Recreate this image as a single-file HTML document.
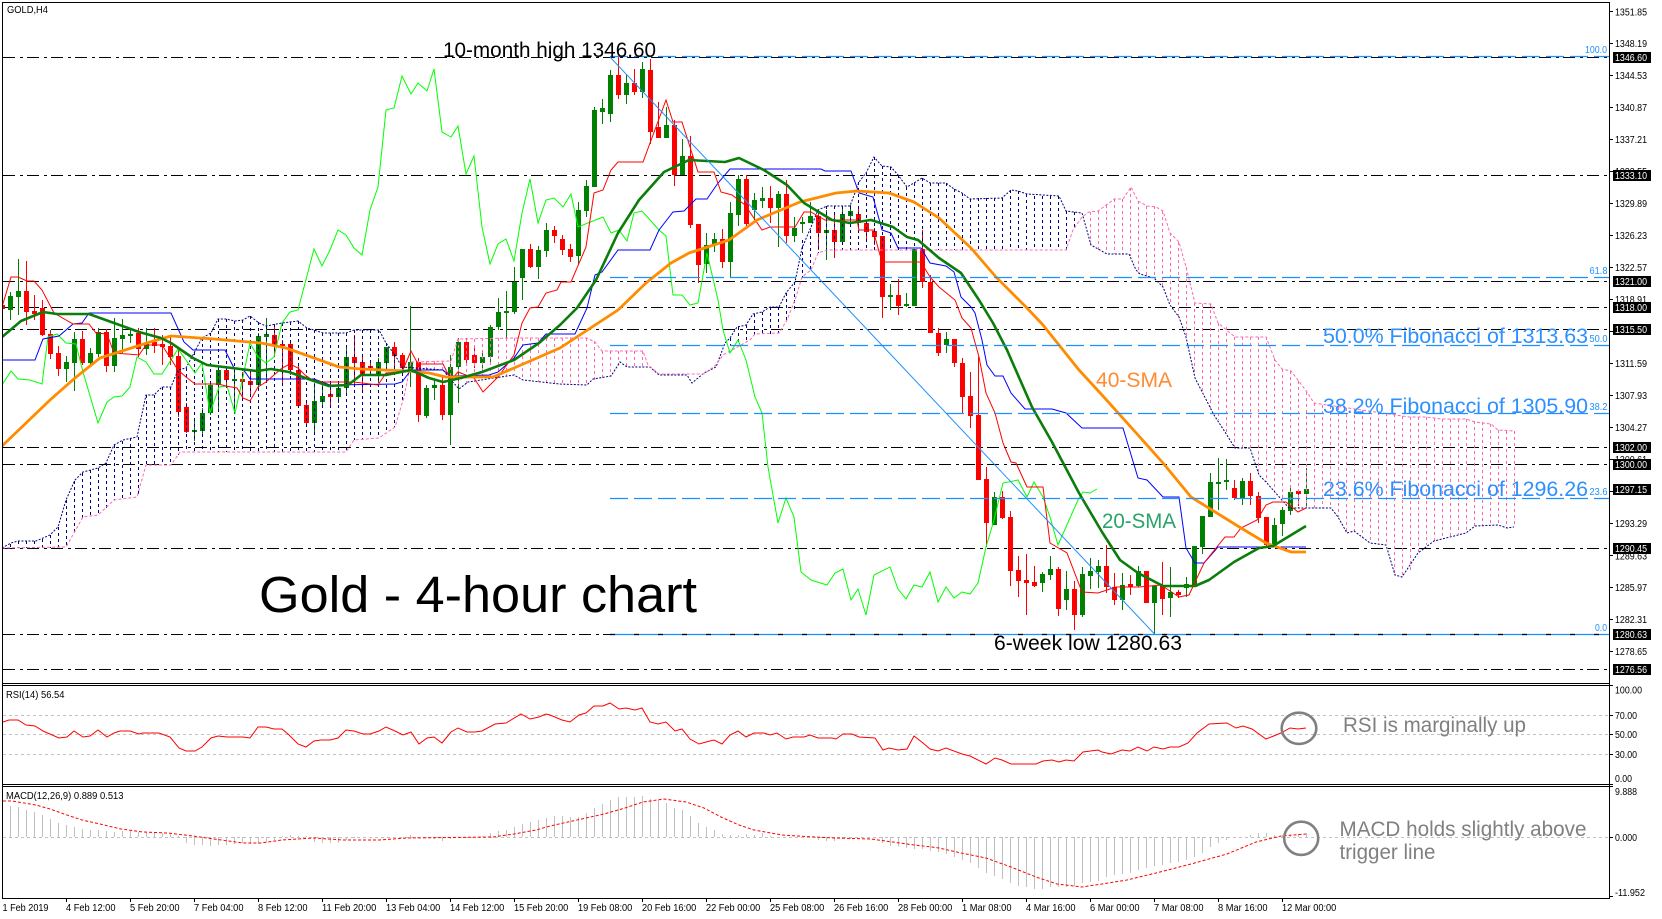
<!DOCTYPE html>
<html><head><meta charset="utf-8"><title>Gold - 4-hour chart</title>
<style>
html,body{margin:0;padding:0;background:#fff;width:1662px;height:919px;overflow:hidden}
svg{position:absolute;left:0;top:0;display:block}
text{font-family:"Liberation Sans",sans-serif;fill:#000}
.a{font-size:10px}
.b{font-size:10px;fill:#fff}
.f{font-size:10px;fill:#1e90ff}
.big{font-size:21px}
.fib{font-size:21px;fill:#2e90ff}
.g{font-size:21px;fill:#808080}
</style></head><body>
<svg width="1662" height="919" viewBox="0 0 1662 919" xmlns="http://www.w3.org/2000/svg">
<rect width="1662" height="919" fill="#fff"/>
<defs><clipPath id="m"><rect x="3" y="3" width="1606" height="680"/></clipPath></defs>

<!-- horizontal dash-dot levels -->
<g stroke="#000" stroke-width="1" stroke-dasharray="12 5 3 4" fill="none">
<path d="M3 57.5H1609M3 175.5H1609M3 281.5H1609M3 307.5H1609M3 329.5H1609M3 447.5H1609M3 464.5H1609M3 548.5H1609M3 634.5H1609M3 669.5H1609"/>
</g>

<g clip-path="url(#m)">
<!-- candles -->
<g transform="translate(.5 0)" fill="none">
<path stroke="#008000" stroke-width="1" d="M10 292V320M18 259V315M66 356V382M74 332V391M90 348V366M98 328V357M114 318V372M122 319V353M130 328V343M146 328V355M194 418V441M202 408V437M210 383V415M218 367V412M234 370V413M258 333V388M266 318V383M314 383V432M322 385V407M338 382V403M346 345V393M378 358V383M386 347V367M410 306V387M426 385V418M434 380V400M450 355V445M458 338V403M482 350V370M490 325V363M498 298V330M506 291V340M514 267V314M522 249V300M538 246V279M546 223V257M578 202V265M586 180V217M594 107V187M602 99V124M610 70V122M626 75V104M642 62V98M666 107V138M682 139V175M706 233V273M714 233V252M730 202V277M738 175V226M754 193V223M762 187V208M778 191V247M794 217V242M802 217V233M810 202V223M826 210V260M842 207V242M850 205V223M890 284V310M906 293V307M914 249V306M946 332V353M994 492V525M1042 572V592M1050 556V580M1066 571V610M1082 567V617M1090 558V589M1098 560V588M1122 573V610M1138 566V587M1154 586V634M1170 567V617M1186 577V597M1194 546V587M1202 516V554M1210 473V517M1218 458V510M1226 459V490M1242 478V505M1274 518V545M1282 507V536M1290 488V515M1306 468V506"/>
<path stroke="#008000" stroke-width="5" d="M10 296V310M18 291V297M66 362V369M74 339V363M90 353V363M98 332V354M114 338V366M122 335V339M130 334V336M146 344V349M194 430V432M202 413V431M210 385V413M218 370V385M234 379V381M258 336V385M266 334V337M314 401V423M322 396V402M338 388V397M346 357V388M378 362V375M386 347V363M410 362V370M426 388V416M434 385V388M450 367V415M458 342V367M482 357V363M490 327V357M498 312V327M506 311V313M514 282V312M522 249V278M538 250V267M546 230V251M578 210V256M586 186V211M594 110V187M602 108V112M610 75V114M626 83V95M642 69V92M666 125V138M682 156V175M706 245V264M714 239V245M730 213V262M738 179V215M754 200V210M762 198V201M778 194V208M794 228V236M802 222V224M810 216V223M826 230V233M842 214V242M850 211V216M890 295V297M906 304V306M914 249V306M946 339V345M994 497V525M1042 574V583M1050 569V575M1066 589V600M1082 574V615M1090 571V576M1098 566V572M1122 585V600M1138 571V586M1154 586V603M1170 592V598M1186 584V588M1194 546V587M1202 516V547M1210 482V517M1218 482V484M1226 480V482M1242 481V498M1274 525V545M1282 510V524M1290 492V511M1306 489V494"/>
<path stroke="#f00" stroke-width="1" d="M2 300V312M26 261V325M34 295V320M42 300V336M50 330V359M58 346V376M82 331V365M106 329V372M138 328V357M154 328V353M162 335V365M170 335V365M178 350V417M186 403V433M226 367V385M242 372V400M250 370V395M274 327V355M282 340V383M290 342V375M298 365V407M306 400V424M330 383V408M354 335V385M362 355V393M370 362V372M394 342V368M402 353V375M418 358V422M442 377V420M466 338V363M474 347V368M530 244V268M554 226V243M562 235V255M570 244V262M618 57V99M634 69V95M650 59V144M658 102V138M674 120V186M690 136V228M698 224V283M722 229V268M746 175V229M770 186V223M786 180V243M818 213V250M834 213V258M858 207V229M866 220V242M874 228V245M882 236V318M898 279V315M922 230V288M930 275V333M938 328V356M954 339V367M962 358V413M970 372V428M978 357V480M986 467V547M1002 491V519M1010 511V586M1018 556V597M1026 554V615M1034 566V587M1058 567V616M1074 581V630M1106 545V593M1114 573V605M1130 575V595M1146 571V603M1162 562V615M1178 590V598M1234 480V500M1250 473V505M1258 492V523M1266 517V546M1298 491V506"/>
<path stroke="#f00" stroke-width="5" d="M2 305V309M26 291V312M34 311V314M42 308V335M50 334V354M58 353V369M82 339V363M106 332V366M138 333V349M154 342V346M162 344V347M170 346V357M178 356V412M186 407V432M226 370V380M242 379V382M250 381V385M274 335V345M282 344V346M290 344V370M298 370V406M306 405V423M330 394V397M354 357V363M362 362V375M370 366V368M394 347V356M402 355V368M418 362V415M442 385V415M466 342V360M474 355V363M530 249V267M554 230V236M562 239V250M570 249V257M618 75V95M634 83V92M650 70V132M658 127V138M674 125V175M690 156V225M698 224V265M722 239V262M746 179V224M770 198V208M786 194V236M818 216V233M834 230V242M858 214V223M866 223V232M874 231V237M882 236V297M898 295V306M922 249V282M930 282V333M938 333V353M954 339V363M962 363V397M970 396V416M978 415V480M986 479V523M1002 497V518M1010 517V571M1018 570V581M1026 580V583M1034 582V586M1058 569V609M1074 589V615M1106 566V587M1114 587V600M1130 584V587M1146 571V603M1162 586V599M1178 592V595M1234 488V498M1250 481V496M1258 496V518M1266 517V545M1298 491V494"/>
</g>

<!-- ichimoku hatch -->
<path fill="none" stroke="#000080" stroke-width="1" stroke-dasharray="3 3" d="M10.5 544V548M18.5 541V548M26.5 541V548M34.5 541V548M42.5 539V548M50.5 535V548M58.5 527V547M66.5 500V547M74.5 481V532M82.5 473V518M90.5 470V516M98.5 468V515M106.5 463V510M114.5 445V500M122.5 441V499M130.5 438V498M138.5 437V497M146.5 395V465M154.5 395V465M162.5 387V465M170.5 387V465M178.5 370V455M186.5 368V452M194.5 352V452M202.5 338V452M210.5 333V452M218.5 319V452M226.5 319V452M234.5 321V452M242.5 320V452M250.5 316V452M258.5 322V452M266.5 326V452M274.5 324V452M282.5 323V452M290.5 322V452M298.5 321V452M306.5 328V452M314.5 330V452M322.5 333V452M330.5 333V452M338.5 333V452M346.5 333V452M354.5 330V440M362.5 330V439M370.5 330V438M378.5 330V438M386.5 343V433M394.5 354V427M402.5 367V400M730.5 338V346M738.5 327V345M746.5 325V342M754.5 314V335M762.5 312V335M770.5 307V334M778.5 307V333M786.5 293V322M794.5 282V309M802.5 240V277M810.5 230V270M818.5 210V253M826.5 206V250M834.5 206V250M842.5 206V250M850.5 206V250M858.5 182V250M866.5 173V250M874.5 157V250M882.5 166V250M890.5 167V250M898.5 175V250M906.5 187V250M914.5 183V250M922.5 178V250M930.5 183V250M938.5 183V250M946.5 183V250M954.5 189V250M962.5 193V250M970.5 199V250M978.5 198V250M986.5 198V250M994.5 198V250M1002.5 198V250M1010.5 190V250M1018.5 191V250M1026.5 194V250M1034.5 196V250M1042.5 196V250M1050.5 196V250M1058.5 196V250M1066.5 211V250M1074.5 212V229"/>
<path fill="none" stroke="#ff69b4" stroke-width="1" stroke-dasharray="3 3" d="M410.5 362V370M418.5 361V370M426.5 361V370M434.5 361V370M442.5 361V370M450.5 361V380M458.5 339V386M466.5 339V384M474.5 339V382M482.5 338V380M490.5 338V378M498.5 338V377M506.5 338V376M514.5 338V375M522.5 338V380M530.5 338V381M538.5 338V382M546.5 338V383M554.5 338V384M562.5 338V385M570.5 338V385M578.5 338V385M586.5 338V385M594.5 341V380M602.5 351V378M610.5 351V376M618.5 351V365M626.5 351V367M634.5 351V367M642.5 351V367M1090.5 212V245M1098.5 211V250M1106.5 205V253M1114.5 199V254M1122.5 199V254M1130.5 188V256M1138.5 201V274M1146.5 206V276M1154.5 206V278M1162.5 211V287M1170.5 233V305M1178.5 242V317M1186.5 267V337M1194.5 303V375M1202.5 304V392M1210.5 304V408M1218.5 323V420M1226.5 327V433M1234.5 337V448M1242.5 337V448M1250.5 337V448M1258.5 337V474M1266.5 337V482M1274.5 358V492M1282.5 369V500M1290.5 371V508M1298.5 381V508M1306.5 392V508M1314.5 403V508M1322.5 405V508M1330.5 406V508M1338.5 407V517M1346.5 408V533M1354.5 409V531M1362.5 410V537M1370.5 411V543M1378.5 412V544M1386.5 413V545M1394.5 414V575M1402.5 416V577M1410.5 417V570M1418.5 417V553M1426.5 417V545M1434.5 418V541M1442.5 419V538M1450.5 419V536M1458.5 419V534M1466.5 419V533M1474.5 421V526M1482.5 422V525M1490.5 424V525M1498.5 430V525M1506.5 431V528M1514.5 431V527"/>

<!-- senkou A -->
<polyline fill="none" stroke="#000080" stroke-width="1" stroke-dasharray="2 1.5" points="2,548 11,543 18,541 36,541 50,535 58,527 66,500 75,480 83,472 98,468 106,463 114,445 123,440 137,437 146,395 154,395 162,387 171,387 178,370 186,368 202,338 211,333 218,319 226,319 235,321 243,320 250,316 259,323 266,326 282,323 298,321 307,328 314,330 323,333 346,333 354,330 379,330 386,343 395,355 402,367 443,370 451,380 459,389 468,382 514,375 523,380 560,384 587,385 593,379 611,376 620,362 627,367 650,367 659,375 687,375 692,383 704,373 716,367 725,343 730,338 737,327 746,325 753,314 762,312 770,307 779,307 786,293 795,282 802,248 811,227 818,210 827,206 850,206 859,182 866,173 874,157 882,166 891,167 898,175 907,187 914,183 922,178 930,183 939,183 946,183 954,189 962,193 970,199 1002,198 1011,190 1018,191 1027,194 1059,196 1066,211 1082,213 1091,245 1107,254 1129,254 1136,270 1140,274 1154,278 1163,287 1170,305 1179,317 1186,337 1195,378 1214,415 1225,432 1235,448 1250,448 1259,475 1266,482 1289,508 1331,508 1338,517 1347,533 1354,531 1370,543 1386,545 1395,575 1402,577 1418,553 1434,541 1466,533 1475,526 1498,525 1507,528 1514,527"/>
<!-- senkou B -->
<polyline fill="none" stroke="#ff69b4" stroke-width="1" stroke-dasharray="3 2" points="2,548 66,547 83,517 98,515 114,500 137,497 146,465 171,465 180,452 346,452 354,440 379,438 395,427 404,397 411,362 451,361 458,339 514,338 587,338 595,342 602,351 643,351 648,365 659,374 704,374 716,365 723,355 750,340 755,334 779,333 787,320 795,300 802,277 811,270 818,253 827,250 1066,250 1073,230 1082,217 1089,212 1098,211 1109,203 1114,199 1123,199 1131,187 1138,201 1147,206 1156,207 1163,211 1170,233 1179,242 1186,267 1195,303 1211,304 1218,323 1235,337 1266,337 1275,360 1282,369 1291,371 1307,392 1314,403 1409,417 1427,417 1441,419 1466,419 1475,422 1491,424 1498,430 1514,431"/>

<!-- chikou -->
<polyline fill="none" stroke="#00ff00" stroke-width="1" points="2,385 11,371 18,379 30,380 42,384 48,337 57,334 66,343 76,344 83,372 98,423 107,402 114,397 122,396 130,387 137,357 146,362 154,374 162,374 178,349 186,360 195,373 202,363 210,413 219,387 227,386 235,413 243,377 250,343 258,357 266,363 274,357 282,323 290,312 298,310 314,249 322,266 330,250 338,230 346,235 354,248 362,255 370,210 378,187 386,110 394,108 402,76 411,94 418,83 427,91 434,69 442,132 451,137 458,126 466,174 474,156 482,227 490,264 498,244 506,239 514,261 522,213 530,179 538,223 546,200 554,198 563,207 571,194 578,227 603,217 611,233 619,230 627,241 634,213 642,211 659,230 666,236 673,295 682,295 690,305 698,303 707,253 718,300 723,330 730,353 738,340 746,360 755,397 762,413 768,467 778,523 786,498 794,517 801,572 811,580 827,585 835,573 843,569 851,600 858,589 866,615 874,575 890,567 898,589 906,599 914,585 922,587 930,572 938,602 946,587 954,598 962,592 970,594 978,583 986,547 994,520 1003,483 1018,480 1027,497 1034,482 1043,497 1050,517 1058,545 1078,500 1083,492 1090,493 1097,489"/>
<!-- kijun -->
<polyline fill="none" stroke="#0000ff" stroke-width="1" points="2,360 35,360 43,339 59,336 73,324 82,323 89,313 171,313 184,342 193,350 225,350 234,368 243,369 250,379 314,379 330,385 395,384 402,382 411,370 443,370 450,376 489,375 498,372 514,358 523,345 538,343 546,334 575,334 587,308 595,275 602,272 618,250 650,250 659,230 673,212 684,211 696,199 707,199 718,183 730,169 821,169 825,171 851,171 859,193 873,197 882,230 891,233 898,248 921,248 930,263 946,266 954,272 961,297 971,307 975,313 982,340 987,365 995,376 1003,376 1011,393 1025,409 1052,409 1066,413 1082,428 1123,428 1138,478 1147,480 1163,497 1179,497 1186,548 1195,563 1204,563 1218,547 1306,547"/>
<!-- tenkan -->
<polyline fill="none" stroke="#ff0000" stroke-width="1" points="2,307 11,277 18,277 27,281 34,281 42,290 54,313 73,324 89,324 96,333 107,334 114,353 139,355 146,345 162,345 178,370 186,377 195,384 218,384 226,386 237,388 243,398 250,401 258,387 266,382 282,368 290,364 298,368 305,375 314,381 323,382 354,382 378,385 386,373 402,372 411,351 418,364 443,364 451,380 458,372 474,378 483,392 498,377 514,355 522,323 530,308 538,307 546,293 557,290 561,282 571,282 586,247 594,193 603,190 611,170 618,162 643,162 666,100 673,122 682,122 698,172 714,172 721,192 732,195 745,205 762,230 770,227 795,227 804,212 811,212 825,220 857,220 859,230 873,230 882,262 921,262 930,277 939,287 955,300 962,318 971,328 979,357 986,393 995,413 1003,443 1011,462 1016,463 1027,487 1043,487 1050,543 1067,553 1082,592 1098,593 1116,587 1139,587 1161,585 1179,597 1189,595 1204,563 1216,548 1225,537 1234,537 1241,528 1257,520 1266,505 1273,502 1286,502 1298,512 1306,508"/>
<!-- SMA 40 -->
<polyline fill="none" stroke="#ff8c00" stroke-width="2.8" stroke-linejoin="round" points="2,446 25,424 50,400 75,378 100,358 125,350 150,342 171,336 214,339 261,343 286,348 314,358 339,367 361,369 407,371 429,373 446,377 493,377 514,368 560,348 618,310 646,283 671,263 689,253 729,240 757,220 800,202 836,193 857,191 889,193 914,202 939,218 971,248 996,277 1027,308 1043,325 1079,370 1102,395 1138,435 1163,463 1191,497 1241,528 1266,543 1291,552 1306,552"/>
<!-- SMA 20 -->
<polyline fill="none" stroke="#0a7d0a" stroke-width="2.6" stroke-linejoin="round" points="2,337 21,321 43,312 57,314 89,314 114,323 139,332 161,338 171,343 193,358 207,365 232,368 257,371 271,369 289,372 311,380 329,386 348,385 361,375 386,375 411,370 429,378 443,382 461,378 482,372 514,360 539,343 560,325 577,308 596,280 618,233 639,200 664,172 689,160 725,162 739,158 764,170 787,185 804,203 832,220 850,223 871,220 893,227 907,237 918,240 939,258 961,273 979,300 993,323 1007,350 1032,407 1052,442 1079,493 1102,532 1120,560 1138,573 1163,586 1195,586 1209,580 1234,562 1259,548 1273,546 1306,526"/>

<!-- fibonacci levels -->
<path fill="none" stroke="#1e90ff" stroke-width="1.2" stroke-dasharray="18 6" d="M610 56.5H1609M610 277.5H1609M610 345.5H1609M610 413.5H1609M610 498.5H1609"/>
<path fill="none" stroke="#1e90ff" stroke-width="1.2" d="M610 634.5H1609"/>
<path fill="none" stroke="#000" stroke-width="1.2" stroke-dasharray="5 19" d="M610 634.5H1609"/>
<path fill="none" stroke="#1e90ff" stroke-width="1" d="M610 57L1154.5 634"/>
</g>

<!-- frames -->
<path fill="none" stroke="#000" stroke-width="1" d="M2.5 2.5H1609.5V898.5H2.5ZM2 683.5H1609M2 685.5H1609M2 784.5H1609M2 786.5H1609"/>

<!-- axis ticks -->
<path fill="none" stroke="#000" stroke-width="1" d="M1609 11.5h4M1609 43.5h4M1609 75.5h4M1609 107.5h4M1609 139.5h4M1609 171.5h4M1609 203.5h4M1609 235.5h4M1609 267.5h4M1609 299.5h4M1609 331.5h4M1609 363.5h4M1609 395.5h4M1609 427.5h4M1609 459.5h4M1609 491.5h4M1609 523.5h4M1609 555.5h4M1609 587.5h4M1609 619.5h4M1609 651.5h4M1609 685.5h4M1609 715.5h4M1609 734.5h4M1609 754.5h4M1609 784.5h4M1609 786.5h4M1609 837.5h4M1609 896.5h4M66.5 898v4M130.5 898v4M194.5 898v4M258.5 898v4M322.5 898v4M386.5 898v4M450.5 898v4M514.5 898v4M578.5 898v4M642.5 898v4M706.5 898v4M770.5 898v4M834.5 898v4M898.5 898v4M962.5 898v4M1026.5 898v4M1090.5 898v4M1154.5 898v4M1218.5 898v4M1282.5 898v4"/>

<!-- RSI -->
<path fill="none" stroke="#c0c0c0" stroke-width="1" stroke-dasharray="3 3" d="M3 715.5H1609M3 734.5H1609M3 754.5H1609M3 837.5H1609"/>
<polyline fill="none" stroke="#ff0000" stroke-width="1" points="3,722 9,720 18,720 26,725 35,726 43,731 59,738 67,737 74,731 83,737 90,736 98,730 107,737 114,733 120,731 130,731 139,734 143,733 159,733 170,737 179,748 186,751 195,751 202,747 211,738 218,736 227,737 243,737 250,738 258,727 266,727 274,729 282,729 289,735 298,744 306,747 314,741 321,740 330,740 338,738 346,730 354,731 363,734 370,734 379,731 386,727 395,731 403,735 411,732 419,744 427,738 434,737 442,743 451,732 458,728 467,732 475,732 482,731 495,724 506,723 521,714 530,719 539,717 546,714 550,715 562,720 570,722 579,715 586,713 594,706 603,706 610,703 619,709 626,708 635,710 642,708 650,722 658,724 666,722 675,731 682,729 690,739 699,744 706,742 714,740 722,744 730,735 738,731 746,737 754,733 764,733 770,735 777,733 786,739 793,737 804,737 810,735 818,738 832,738 836,739 843,734 852,734 859,737 875,738 883,750 889,748 898,750 907,749 914,736 923,743 930,749 938,751 946,748 962,754 970,756 986,764 995,758 1002,760 1011,764 1036,764 1043,761 1052,760 1059,762 1066,760 1074,761 1083,752 1098,750 1102,752 1111,754 1122,750 1130,751 1138,747 1147,751 1154,747 1163,749 1170,747 1179,747 1188,743 1197,733 1209,724 1227,723 1236,728 1243,726 1252,729 1266,739 1281,733 1290,728 1298,729 1306,728"/>

<!-- MACD -->
<path fill="none" stroke="#c0c0c0" stroke-width="1" d="M10.5 837V806M18.5 837V807M26.5 837V810M34.5 837V812M42.5 837V815M50.5 837V819M58.5 837V823M66.5 837V825M74.5 837V827M82.5 837V829M90.5 837V830M98.5 837V830M106.5 837V831M114.5 837V832M122.5 837V831M130.5 837V831M138.5 837V832M146.5 837V832M154.5 837V832M162.5 837V833M170.5 837V834M178.5 837V836M186.5 837V843M194.5 837V845M202.5 837V845M210.5 837V846M218.5 837V845M226.5 837V845M234.5 837V844M242.5 837V843M250.5 837V844M258.5 837V844M266.5 837V842M274.5 837V840M282.5 837V836M290.5 837V835M298.5 837V836M306.5 837V836M314.5 837V842M322.5 837V843M330.5 837V843M338.5 837V843M346.5 837V840M354.5 837V838M410.5 837V835M418.5 837V838M426.5 837V838M434.5 837V839M442.5 837V841M450.5 837V839M482.5 837V836M490.5 837V833M498.5 837V831M506.5 837V830M514.5 837V827M522.5 837V824M530.5 837V822M538.5 837V820M546.5 837V818M554.5 837V816M562.5 837V816M570.5 837V817M578.5 837V817M586.5 837V813M594.5 837V808M602.5 837V804M610.5 837V800M618.5 837V797M626.5 837V797M634.5 837V797M642.5 837V796M650.5 837V799M658.5 837V800M666.5 837V803M674.5 837V808M682.5 837V810M690.5 837V816M698.5 837V823M706.5 837V827M714.5 837V830M722.5 837V834M730.5 837V835M738.5 837V835M746.5 837V834M754.5 837V835M762.5 837V833M770.5 837V836M818.5 837V840M826.5 837V841M834.5 837V841M842.5 837V839M850.5 837V839M882.5 837V843M890.5 837V846M898.5 837V846M906.5 837V848M914.5 837V849M922.5 837V849M930.5 837V851M938.5 837V852M946.5 837V854M954.5 837V857M962.5 837V860M970.5 837V863M978.5 837V868M986.5 837V873M994.5 837V876M1002.5 837V879M1010.5 837V883M1018.5 837V886M1026.5 837V887M1034.5 837V889M1042.5 837V889M1050.5 837V887M1058.5 837V887M1066.5 837V887M1074.5 837V886M1082.5 837V883M1090.5 837V882M1098.5 837V881M1106.5 837V877M1114.5 837V875M1122.5 837V874M1130.5 837V873M1138.5 837V870M1146.5 837V868M1154.5 837V866M1162.5 837V865M1170.5 837V863M1178.5 837V862M1186.5 837V860M1194.5 837V857M1202.5 837V853M1210.5 837V847M1218.5 837V843M1226.5 837V840M1250.5 837V835M1258.5 837V833M1266.5 837V833M1274.5 837V835M1282.5 837V835M1290.5 837V835M1298.5 837V834M1306.5 837V833"/>
<polyline fill="none" stroke="#ff0000" stroke-width="1" stroke-dasharray="3 2" points="3,801 12,801 36,805 50,809 64,814 82,820 100,824 121,829 143,832 168,833 193,836 214,839 243,843 261,843 282,840 314,838 343,840 379,840 407,838 493,837 514,834 536,830 550,826 568,822 586,818 604,814 625,808 643,802 664,799 686,802 704,808 721,817 739,825 754,830 782,835 814,837 836,838 871,839 907,844 939,848 961,853 986,858 1011,867 1036,877 1057,884 1082,887 1102,884 1127,880 1156,873 1191,864 1227,854 1256,842 1281,836 1306,834"/>

<!-- circles -->
<ellipse cx="1299" cy="728.3" rx="17.3" ry="15.6" fill="none" stroke="#808080" stroke-width="2.6"/>
<ellipse cx="1301.2" cy="838.3" rx="17" ry="16.6" fill="none" stroke="#808080" stroke-width="2.6"/>

<!-- annotations -->
<text class="big" x="443" y="57" textLength="213" lengthAdjust="spacingAndGlyphs">10-month high 1346.60</text>
<text x="259" y="612" font-size="50.8" textLength="438" lengthAdjust="spacingAndGlyphs">Gold - 4-hour chart</text>
<text class="big" x="994" y="650" textLength="188" lengthAdjust="spacingAndGlyphs">6-week low 1280.63</text>
<text class="big" x="1096" y="387" textLength="76" lengthAdjust="spacingAndGlyphs" style="fill:#ff8a33">40-SMA</text>
<text class="big" x="1102" y="528" textLength="74" lengthAdjust="spacingAndGlyphs" style="fill:#2ba36a">20-SMA</text>
<text class="fib" x="1323" y="343" textLength="265" lengthAdjust="spacingAndGlyphs">50.0% Fibonacci of 1313.63</text>
<text class="fib" x="1323" y="413" textLength="265" lengthAdjust="spacingAndGlyphs">38.2% Fibonacci of 1305.90</text>
<text class="fib" x="1323" y="496" textLength="265" lengthAdjust="spacingAndGlyphs">23.6% Fibonacci of 1296.26</text>
<text class="g" x="1343" y="732" textLength="183" lengthAdjust="spacingAndGlyphs">RSI is marginally up</text>
<text class="g" x="1339.5" y="836" textLength="247" lengthAdjust="spacingAndGlyphs">MACD holds slightly above</text>
<text class="g" x="1339.5" y="859" textLength="96" lengthAdjust="spacingAndGlyphs">trigger line</text>

<!-- panel labels -->
<text class="a" x="7" y="13" textLength="41" lengthAdjust="spacingAndGlyphs">GOLD,H4</text>
<text class="a" x="6" y="698" textLength="58.5" lengthAdjust="spacingAndGlyphs">RSI(14) 56.54</text>
<text class="a" x="6" y="799" textLength="117.5" lengthAdjust="spacingAndGlyphs">MACD(12,26,9) 0.889 0.513</text>

<!-- fib small labels -->
<text class="f" x="1585" y="53" textLength="22" lengthAdjust="spacingAndGlyphs">100.0</text>
<text class="f" x="1589.5" y="274" textLength="18" lengthAdjust="spacingAndGlyphs">61.8</text>
<text class="f" x="1589.5" y="342" textLength="18" lengthAdjust="spacingAndGlyphs">50.0</text>
<text class="f" x="1589.5" y="410" textLength="18" lengthAdjust="spacingAndGlyphs">38.2</text>
<text class="f" x="1589.5" y="495" textLength="18" lengthAdjust="spacingAndGlyphs">23.6</text>
<text class="f" x="1595" y="631" textLength="12" lengthAdjust="spacingAndGlyphs">0.0</text>

<!-- price axis -->
<g class="ax">
<text class="a" x="1615" y="15.5" textLength="32" lengthAdjust="spacingAndGlyphs">1351.85</text>
<text class="a" x="1615" y="47" textLength="32" lengthAdjust="spacingAndGlyphs">1348.19</text>
<text class="a" x="1615" y="79" textLength="32" lengthAdjust="spacingAndGlyphs">1344.53</text>
<text class="a" x="1615" y="111" textLength="32" lengthAdjust="spacingAndGlyphs">1340.87</text>
<text class="a" x="1615" y="143" textLength="32" lengthAdjust="spacingAndGlyphs">1337.21</text>
<text class="a" x="1615" y="175" textLength="32" lengthAdjust="spacingAndGlyphs">1333.55</text>
<text class="a" x="1615" y="207" textLength="32" lengthAdjust="spacingAndGlyphs">1329.89</text>
<text class="a" x="1615" y="239" textLength="32" lengthAdjust="spacingAndGlyphs">1326.23</text>
<text class="a" x="1615" y="271" textLength="32" lengthAdjust="spacingAndGlyphs">1322.57</text>
<text class="a" x="1615" y="303" textLength="32" lengthAdjust="spacingAndGlyphs">1318.91</text>
<text class="a" x="1615" y="367" textLength="32" lengthAdjust="spacingAndGlyphs">1311.59</text>
<text class="a" x="1615" y="399" textLength="32" lengthAdjust="spacingAndGlyphs">1307.93</text>
<text class="a" x="1615" y="431" textLength="32" lengthAdjust="spacingAndGlyphs">1304.27</text>
<text class="a" x="1615" y="463" textLength="32" lengthAdjust="spacingAndGlyphs">1300.61</text>
<text class="a" x="1615" y="527" textLength="32" lengthAdjust="spacingAndGlyphs">1293.29</text>
<text class="a" x="1615" y="559.5" textLength="32" lengthAdjust="spacingAndGlyphs">1289.63</text>
<text class="a" x="1615" y="591" textLength="32" lengthAdjust="spacingAndGlyphs">1285.97</text>
<text class="a" x="1615" y="623" textLength="32" lengthAdjust="spacingAndGlyphs">1282.31</text>
<text class="a" x="1615" y="655" textLength="32" lengthAdjust="spacingAndGlyphs">1278.65</text>
<text class="a" x="1615" y="693.5" textLength="27" lengthAdjust="spacingAndGlyphs">100.00</text>
<text class="a" x="1615" y="719" textLength="22" lengthAdjust="spacingAndGlyphs">70.00</text>
<text class="a" x="1615" y="738" textLength="22" lengthAdjust="spacingAndGlyphs">50.00</text>
<text class="a" x="1615" y="758" textLength="22" lengthAdjust="spacingAndGlyphs">30.00</text>
<text class="a" x="1615" y="782" textLength="17" lengthAdjust="spacingAndGlyphs">0.00</text>
<text class="a" x="1615" y="795" textLength="22" lengthAdjust="spacingAndGlyphs">9.888</text>
<text class="a" x="1615" y="841" textLength="22" lengthAdjust="spacingAndGlyphs">0.000</text>
<text class="a" x="1615" y="896" textLength="30" lengthAdjust="spacingAndGlyphs">-11.952</text>
</g>

<!-- price boxes -->
<path fill="#000" d="M1613 52h38v11h-38zM1613 170h38v11h-38zM1613 276h38v11h-38zM1613 302h38v11h-38zM1613 324h38v11h-38zM1613 442h38v11h-38zM1613 459h38v11h-38zM1613 484h38v11h-38zM1613 543h38v11h-38zM1613 629h38v11h-38zM1613 664h38v11h-38z"/>
<text class="b" x="1615" y="61" textLength="32" lengthAdjust="spacingAndGlyphs">1346.60</text>
<text class="b" x="1615" y="179" textLength="32" lengthAdjust="spacingAndGlyphs">1333.10</text>
<text class="b" x="1615" y="285" textLength="32" lengthAdjust="spacingAndGlyphs">1321.00</text>
<text class="b" x="1615" y="311" textLength="32" lengthAdjust="spacingAndGlyphs">1318.00</text>
<text class="b" x="1615" y="333" textLength="32" lengthAdjust="spacingAndGlyphs">1315.50</text>
<text class="b" x="1615" y="451" textLength="32" lengthAdjust="spacingAndGlyphs">1302.00</text>
<text class="b" x="1615" y="468" textLength="32" lengthAdjust="spacingAndGlyphs">1300.00</text>
<text class="b" x="1615" y="493" textLength="32" lengthAdjust="spacingAndGlyphs">1297.15</text>
<text class="b" x="1615" y="552" textLength="32" lengthAdjust="spacingAndGlyphs">1290.45</text>
<text class="b" x="1615" y="638" textLength="32" lengthAdjust="spacingAndGlyphs">1280.63</text>
<text class="b" x="1615" y="673" textLength="32" lengthAdjust="spacingAndGlyphs">1276.56</text>

<!-- date axis -->
<text class="a" x="2.5" y="911" textLength="46" lengthAdjust="spacingAndGlyphs">1 Feb 2019</text>
<text class="a" x="66" y="911" textLength="49.5" lengthAdjust="spacingAndGlyphs">4 Feb 12:00</text>
<text class="a" x="130" y="911" textLength="49.5" lengthAdjust="spacingAndGlyphs">5 Feb 20:00</text>
<text class="a" x="194" y="911" textLength="49.5" lengthAdjust="spacingAndGlyphs">7 Feb 04:00</text>
<text class="a" x="258" y="911" textLength="49.5" lengthAdjust="spacingAndGlyphs">8 Feb 12:00</text>
<text class="a" x="322" y="911" textLength="54.3" lengthAdjust="spacingAndGlyphs">11 Feb 20:00</text>
<text class="a" x="386" y="911" textLength="54.3" lengthAdjust="spacingAndGlyphs">13 Feb 04:00</text>
<text class="a" x="450" y="911" textLength="54.3" lengthAdjust="spacingAndGlyphs">14 Feb 12:00</text>
<text class="a" x="514" y="911" textLength="54.3" lengthAdjust="spacingAndGlyphs">15 Feb 20:00</text>
<text class="a" x="578" y="911" textLength="54.3" lengthAdjust="spacingAndGlyphs">19 Feb 08:00</text>
<text class="a" x="642" y="911" textLength="54.3" lengthAdjust="spacingAndGlyphs">20 Feb 16:00</text>
<text class="a" x="706" y="911" textLength="54.3" lengthAdjust="spacingAndGlyphs">22 Feb 00:00</text>
<text class="a" x="770" y="911" textLength="54.3" lengthAdjust="spacingAndGlyphs">25 Feb 08:00</text>
<text class="a" x="834" y="911" textLength="54.3" lengthAdjust="spacingAndGlyphs">26 Feb 16:00</text>
<text class="a" x="898" y="911" textLength="54.3" lengthAdjust="spacingAndGlyphs">28 Feb 00:00</text>
<text class="a" x="962" y="911" textLength="49.5" lengthAdjust="spacingAndGlyphs">1 Mar 08:00</text>
<text class="a" x="1026" y="911" textLength="49.5" lengthAdjust="spacingAndGlyphs">4 Mar 16:00</text>
<text class="a" x="1090" y="911" textLength="49.5" lengthAdjust="spacingAndGlyphs">6 Mar 00:00</text>
<text class="a" x="1154" y="911" textLength="49.5" lengthAdjust="spacingAndGlyphs">7 Mar 08:00</text>
<text class="a" x="1218" y="911" textLength="49.5" lengthAdjust="spacingAndGlyphs">8 Mar 16:00</text>
<text class="a" x="1282" y="911" textLength="54.3" lengthAdjust="spacingAndGlyphs">12 Mar 00:00</text>
</svg>
</body></html>
